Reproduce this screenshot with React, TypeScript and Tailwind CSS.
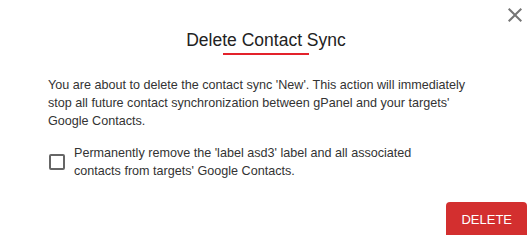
export default function App() {
  return (
    <div className="relative w-[532px] h-[235px] overflow-hidden bg-white font-['Liberation_Sans'] text-[#333]">
      <button className="absolute top-[3px] left-[503px] w-6 h-6 text-[#757575]" aria-label="Close">
        <svg viewBox="0 0 24 24" className="w-6 h-6" fill="currentColor">
          <path d="M19 6.41 17.59 5 12 10.59 6.41 5 5 6.41 10.59 12 5 17.59 6.41 19 12 13.41 17.59 19 19 17.59 13.41 12z" />
        </svg>
      </button>

      <div className="flex flex-col items-center pt-[28px]">
        <h2 className="text-[17.5px] leading-[24px] text-[#222]">Delete Contact Sync</h2>
        <div className="mt-[1px] w-[86px] h-[2px] bg-[#e3222b]" />
      </div>

      <p className="mt-[21px] px-12 text-[12.6px] leading-[18px]">
        You are about to delete the contact sync 'New'. This action will immediately stop all future
        contact synchronization between gPanel and your targets' Google Contacts.
      </p>

      <label className="mt-[14px] ml-[49px] flex items-center gap-[9px] w-fit">
        <span className="w-4 h-4 border-2 border-[#666] rounded-[2px] shrink-0" />
        <span className="w-[370px] text-[12.6px] leading-[18px]">
          Permanently remove the 'label asd3' label and all associated contacts from targets' Google Contacts.
        </span>
      </label>

      <div className="flex justify-end pr-[5px] mt-[22px]">
        <button className="h-9 px-[15px] rounded bg-[#d32f2f] text-white text-[13px] uppercase">
          Delete
        </button>
      </div>
    </div>
  )
}
